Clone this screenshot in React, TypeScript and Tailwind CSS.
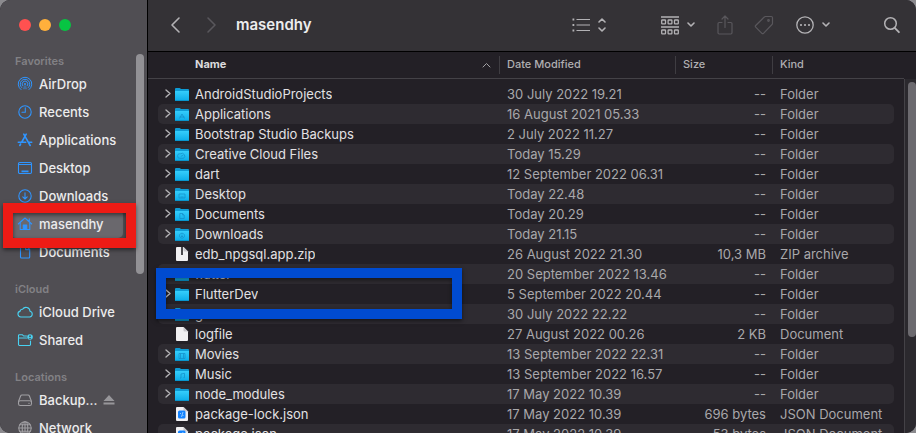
import React from "react";
import type { ReactNode } from "react";

type FileKind = "folder" | "zip" | "doc" | "json";
type Mark = "app" | "cloud" | "screen" | "page" | "down" | "film" | "note";

interface Entry {
  name: string;
  date: string;
  size: string;
  kind: string;
  icon: FileKind;
  mark?: Mark;
}

const entries: Entry[] = [
  { name: "AndroidStudioProjects", date: "30 July 2022 19.21", size: "--", kind: "Folder", icon: "folder" },
  { name: "Applications", date: "16 August 2021 05.33", size: "--", kind: "Folder", icon: "folder", mark: "app" },
  { name: "Bootstrap Studio Backups", date: "2 July 2022 11.27", size: "--", kind: "Folder", icon: "folder" },
  { name: "Creative Cloud Files", date: "Today 15.29", size: "--", kind: "Folder", icon: "folder", mark: "cloud" },
  { name: "dart", date: "12 September 2022 06.31", size: "--", kind: "Folder", icon: "folder" },
  { name: "Desktop", date: "Today 22.48", size: "--", kind: "Folder", icon: "folder", mark: "screen" },
  { name: "Documents", date: "Today 20.29", size: "--", kind: "Folder", icon: "folder", mark: "page" },
  { name: "Downloads", date: "Today 21.15", size: "--", kind: "Folder", icon: "folder", mark: "down" },
  { name: "edb_npgsql.app.zip", date: "26 August 2022 21.30", size: "10,3 MB", kind: "ZIP archive", icon: "zip" },
  { name: "flutter", date: "20 September 2022 13.46", size: "--", kind: "Folder", icon: "folder" },
  { name: "FlutterDev", date: "5 September 2022 20.44", size: "--", kind: "Folder", icon: "folder" },
  { name: "go", date: "30 July 2022 22.22", size: "--", kind: "Folder", icon: "folder" },
  { name: "logfile", date: "27 August 2022 00.26", size: "2 KB", kind: "Document", icon: "doc" },
  { name: "Movies", date: "13 September 2022 22.31", size: "--", kind: "Folder", icon: "folder", mark: "film" },
  { name: "Music", date: "13 September 2022 16.57", size: "--", kind: "Folder", icon: "folder", mark: "note" },
  { name: "node_modules", date: "17 May 2022 10.39", size: "--", kind: "Folder", icon: "folder" },
  { name: "package-lock.json", date: "17 May 2022 10.39", size: "696 bytes", kind: "JSON Document", icon: "json" },
  { name: "package.json", date: "17 May 2022 10.39", size: "53 bytes", kind: "JSON Document", icon: "json" },
];

const marks: Record<Mark, ReactNode> = {
  app: <path d="M4.5 10.500 7 6l2.500 4.500M4.500 9h5" />,
  cloud: <path d="M5 10.300a2.300 2.300 0 1 1 .5-4.500 2.600 2.600 0 1 1 3 4.500zM5.800 8.500l2.400-1.500" />,
  screen: <path d="M4 6h6v4H4zM5.500 9h3" />,
  page: <path d="M4.800 5.500h2.700L9.200 7v3.500H4.800zM7.500 5.500V7H9" />,
  down: <path d="M7 5.200a2.500 2.500 0 1 0 .01 0M7 6.500v2.400M6 8l1 1 1-1" />,
  film: <path d="M4 5.500h6v5H4zM5.500 5.500v5M8.500 5.500v5" />,
  note: <path d="M6 10V6l3.500-.7V9.500M5 10.100h1M8.500 9.600h1" />,
};

function FolderIcon({ mark }: { mark?: Mark }) {
  return (
    <svg width="14" height="14" viewBox="0 -1 14 14" aria-hidden="true" className="shrink-0">
      <defs>
        <linearGradient id="folderFace" x1="0" y1="0" x2="0" y2="1">
          <stop offset="0" stopColor="#35cdfb" />
          <stop offset="1" stopColor="#0cabe8" />
        </linearGradient>
      </defs>
      <path d="M0 1Q0 0 1 0h3.500q.6 0 1 .5l.4.500h7.100q1 0 1 1V5H0z" fill="#0e9bd4" />
      <path d="M0 3h14v9q0 1-1 1H1q-1 0-1-1z" fill="url(#folderFace)" />
      <path d="M0 12h14q0 1-1 1H1q-1 0-1-1z" fill="#0895cd" />
      {mark && (
        <g fill="none" stroke="#1591cb" strokeWidth=".9" strokeOpacity=".85">
          {marks[mark]}
        </g>
      )}
    </svg>
  );
}

function PageIcon({ kind }: { kind: FileKind }) {
  return (
    <svg width="14" height="14" viewBox="0 0 14 14" aria-hidden="true" className="shrink-0">
      <path d="M1 1q0-1 1-1h6.500L13 4.500V13q0 1-1 1H2q-1 0-1-1z" fill="#f1f0f2" />
      <path d="M8.500 0v3.500q0 1 1 1H13z" fill="#c9c8cc" />
      {kind === "zip" && <path d="M6 0h2v8H6z" fill="#4a494d" />}
      {kind === "json" && (
        <>
          <rect x="3" y="3.500" width="7.500" height="8" rx="1.500" fill="#1483ff" />
          <path d="M8 5 6.500 10M6 6.500H5M8.500 8.500h-1" stroke="#9fd0ff" strokeWidth=".9" fill="none" />
        </>
      )}
    </svg>
  );
}

function SideIcon({ children, tone }: { children: ReactNode; tone: string }) {
  return (
    <svg
      width="16"
      height="16"
      viewBox="0 0 16 16"
      fill="none"
      stroke="currentColor"
      strokeWidth="1.1"
      strokeLinecap="round"
      strokeLinejoin="round"
      aria-hidden="true"
      className={`shrink-0 ${tone}`}
    >
      {children}
    </svg>
  );
}

const blue = "text-[#2f95ff]";
const cyan = "text-[#48d2f2]";
const grey = "text-[#a09fa3]";

interface Place {
  label: string;
  tone: string;
  icon: ReactNode;
  selected?: boolean;
  eject?: boolean;
}

const groups: { title: string; places: Place[] }[] = [
  {
    title: "Favorites",
    places: [
      {
        label: "AirDrop",
        tone: blue,
        icon: (
          <>
            <path d="M4 13.600a6.800 6.800 0 1 1 8 0" strokeWidth="1" />
            <path d="M4.700 11.600a4.800 4.800 0 1 1 6.600 0" strokeWidth="1" />
            <path d="M5.800 9.900a2.900 2.900 0 1 1 4.400 0" strokeWidth="1" />
            <path d="M8 8.200 5.500 13.200h5z" fill="currentColor" stroke="none" fillOpacity=".45" />
            <circle cx="8" cy="8" r="1" fill="currentColor" stroke="none" />
          </>
        ),
      },
      {
        label: "Recents",
        tone: blue,
        icon: (
          <>
            <circle cx="8" cy="8" r="6.200" />
            <path d="M8.300 3.800v4.500H5" />
          </>
        ),
      },
      {
        label: "Applications",
        tone: blue,
        icon: (
          <path d="M6.800 2.200 8 4.300M9.200 2.200 4.800 10M8 4.300l5.200 9.200M1.300 10.300h7.400M11.300 10.300h3.400M3.600 12 2.800 13.500" strokeWidth="1.600" />
        ),
      },
      {
        label: "Desktop",
        tone: blue,
        icon: (
          <>
            <rect x="1.500" y="2.500" width="13" height="11" rx="1.200" />
            <path d="M1.500 4.500h13" strokeWidth="1.200" />
            <path d="M4.500 11.300h7" strokeWidth="1.800" strokeLinecap="butt" />
          </>
        ),
      },
      {
        label: "Downloads",
        tone: blue,
        icon: (
          <>
            <circle cx="8" cy="8" r="6.200" />
            <path d="M8 4.800v6M5.800 8.800 8 11l2.200-2.200" />
          </>
        ),
      },
      {
        label: "masendhy",
        tone: blue,
        selected: true,
        icon: (
          <>
            <path d="M1.300 8 8 2l6.700 6M12.300 5.500V2.800" />
            <path d="M3.200 7v6.500h9.600V7" />
            <path d="M6.300 13.500V9h3.400v4.500z" fill="currentColor" />
          </>
        ),
      },
      {
        label: "Documents",
        tone: blue,
        icon: <path d="M3.500 2.500q0-1 1-1h4.300l3.900 3.900v7.600q0 1-1 1H4.500q-1 0-1-1zM8.600 1.800v3.800h3.800" />,
      },
    ],
  },
  {
    title: "iCloud",
    places: [
      {
        label: "iCloud Drive",
        tone: cyan,
        icon: <path d="M3.800 13a3 3 0 0 1-.6-5.900 2 2 0 0 1 2.400-1.800A4 4 0 0 1 13 7.300a2.900 2.900 0 0 1-.3 5.700z" />,
      },
      {
        label: "Shared",
        tone: cyan,
        icon: (
          <>
            <path d="M9.500 4H6.600L5.500 2.800H2.300q-.8 0-.8.800v9q0 .9.900.9h10.200q.9 0 .9-.9V9M1.500 6h8" />
            <circle cx="13" cy="5" r="2.800" fill="currentColor" stroke="none" />
            <circle cx="13" cy="4.200" r=".9" fill="#504e53" stroke="none" />
            <path d="M11.600 6.700a1.500 1.500 0 0 1 2.800 0z" fill="#504e53" stroke="none" />
          </>
        ),
      },
    ],
  },
  {
    title: "Locations",
    places: [
      {
        label: "Backup...",
        tone: grey,
        eject: true,
        icon: (
          <>
            <path d="M1.500 9.500 3.600 4q.4-1 1.400-1h6q1 0 1.400 1l2.100 5.500" />
            <rect x="1.500" y="8.800" width="13" height="4.700" rx="1.800" />
            <path d="M11.800 11.200h.4" />
          </>
        ),
      },
      {
        label: "Network",
        tone: grey,
        icon: (
          <>
            <circle cx="8" cy="8" r="6.200" />
            <ellipse cx="8" cy="8" rx="2.800" ry="6.200" />
            <path d="M8 1.800v12.400M1.800 8h12.400M2.800 4.800h10.400M2.800 11.200h10.400" />
          </>
        ),
      },
    ],
  },
];

function Sidebar() {
  return (
    <nav className="relative w-[147px] shrink-0 overflow-hidden bg-[#504e53]" aria-label="Places">
      <div className="flex h-[52px] items-center gap-2 px-[19px] pb-0.5">
        <button type="button" aria-label="Close" className="size-3 rounded-full bg-[#ff5150]" />
        <button type="button" aria-label="Minimise" className="size-3 rounded-full bg-[#ffb03c]" />
        <button type="button" aria-label="Zoom" className="size-3 rounded-full bg-[#07c443]" />
      </div>
      {groups.map((group, i) => (
        <section key={group.title} className={i === 0 ? "" : "pt-[14px]"}>
          <h2 className="h-[18px] pl-[15px] text-[11px] leading-[18px] font-semibold text-[#828185]">{group.title}</h2>
          <ul className="px-[10px]">
            {group.places.map((place) => (
              <li key={place.label}>
                <a
                  href="#"
                  className={`mr-[14px] flex h-7 items-center gap-[6px] rounded-[5px] pl-[7px] text-[13px] font-medium whitespace-nowrap text-[#ececed] ${place.selected ? "bg-[#6a686d]" : ""}`}
                >
                  <SideIcon tone={place.tone}>{place.icon}</SideIcon>
                  <span className="pt-0.5">{place.label}</span>
                  {place.eject && (
                    <svg width="12" height="10" viewBox="0 0 12 10" fill="#97969a" aria-hidden="true">
                      <path d="M6 0l5.500 6H.5zM.5 7.500h11v2H.5z" />
                    </svg>
                  )}
                </a>
              </li>
            ))}
          </ul>
        </section>
      ))}
      <div className="absolute top-[54px] right-[3px] h-[220px] w-2 rounded-full bg-[#929195]" />
    </nav>
  );
}

function Chevron() {
  return (
    <svg width="8" height="6" viewBox="0 0 8 6" fill="none" stroke="currentColor" strokeWidth="1.600" strokeLinecap="round" strokeLinejoin="round" aria-hidden="true">
      <path d="M1 1l3 3 3-3" />
    </svg>
  );
}

function Toolbar() {
  return (
    <header className="flex h-[52px] shrink-0 items-center border-b border-black bg-[#343236] pr-[16px] pl-[21px] pb-px text-[#b3b2b5]">
      <button type="button" aria-label="Back">
        <svg width="12" height="18" viewBox="0 0 12 18" fill="none" stroke="currentColor" strokeWidth="1.600" strokeLinecap="round" strokeLinejoin="round" aria-hidden="true">
          <path d="M10 2 3 9l7 7" />
        </svg>
      </button>
      <button type="button" aria-label="Forward" className="ml-6 text-[#59575c]">
        <svg width="12" height="18" viewBox="0 0 12 18" fill="none" stroke="currentColor" strokeWidth="1.600" strokeLinecap="round" strokeLinejoin="round" aria-hidden="true">
          <path d="M3 2l7 7-7 7" />
        </svg>
      </button>
      <h1 className="ml-[19px] flex-1 text-[15px] leading-5 font-semibold text-[#ececed]">masendhy</h1>
      <button type="button" aria-label="View as list" className="flex items-center gap-2">
        <svg width="18" height="14" viewBox="0 0 18 14" fill="none" stroke="currentColor" strokeWidth="1.200" aria-hidden="true">
          <path d="M4.500 1.500H18M4.500 7H18M4.500 12.500H18" />
          <path d="M.5 1.500h1.800M.5 7h1.800M.5 12.500h1.800" strokeWidth="1.800" />
        </svg>
        <svg width="8" height="14" viewBox="0 0 8 14" fill="none" stroke="currentColor" strokeWidth="1.600" strokeLinecap="round" strokeLinejoin="round" aria-hidden="true">
          <path d="M1 4l3-3 3 3M1 10l3 3 3-3" />
        </svg>
      </button>
      <button type="button" aria-label="Group items" className="ml-[55px] flex items-center gap-2">
        <svg width="18" height="19" viewBox="0 0 18 19" fill="none" stroke="currentColor" strokeWidth="1.300" aria-hidden="true">
          <path d="M0 1h18M0 11h18" />
          <rect x=".7" y="4" width="3.800" height="3.800" rx=".6" />
          <rect x="7.100" y="4" width="3.800" height="3.800" rx=".6" />
          <rect x="13.500" y="4" width="3.800" height="3.800" rx=".6" />
          <rect x=".7" y="14" width="3.800" height="3.800" rx=".6" />
          <rect x="7.100" y="14" width="3.800" height="3.800" rx=".6" />
          <rect x="13.500" y="14" width="3.800" height="3.800" rx=".6" />
        </svg>
        <Chevron />
      </button>
      <button type="button" aria-label="Share" className="ml-[22px] text-[#59575c]">
        <svg width="16" height="20" viewBox="0 0 16 20" fill="none" stroke="currentColor" strokeWidth="1.200" strokeLinecap="round" strokeLinejoin="round" aria-hidden="true">
          <path d="M5 7.500H2.200Q1 7.500 1 8.700v9.100Q1 19 2.200 19h11.600q1.200 0 1.200-1.200V8.700q0-1.200-1.200-1.200H11M8 12.500V1M5 4l3-3 3 3" />
        </svg>
      </button>
      <button type="button" aria-label="Edit tags" className="ml-[21px] text-[#59575c]">
        <svg width="20" height="20" viewBox="0 0 20 20" fill="none" stroke="currentColor" strokeWidth="1.200" strokeLinecap="round" strokeLinejoin="round" aria-hidden="true">
          <path d="M11.500 1.500h5.800q1.200 0 1.200 1.200v5.600q0 .7-.5 1.200l-8.500 8.800q-.8.800-1.600 0L1.700 12.100q-.8-.8 0-1.600l8.600-8.500q.5-.5 1.200-.5z" />
          <circle cx="14.500" cy="5.500" r=".8" />
        </svg>
      </button>
      <button type="button" aria-label="More actions" className="ml-[22px] flex items-center gap-2">
        <svg width="18" height="18" viewBox="0 0 18 18" fill="none" stroke="currentColor" strokeWidth="1.300" aria-hidden="true">
          <circle cx="9" cy="9" r="8.200" />
          <path d="M5 9h.01M9 9h.01M13 9h.01" strokeWidth="2.200" strokeLinecap="round" />
        </svg>
        <Chevron />
      </button>
      <button type="button" aria-label="Search" className="ml-[53px]">
        <svg width="17" height="18" viewBox="0 0 17 18" fill="none" stroke="currentColor" strokeWidth="1.500" strokeLinecap="round" aria-hidden="true">
          <circle cx="7.500" cy="7.500" r="5.800" />
          <path d="M11.700 11.800l4.200 4.400" strokeWidth="1.800" />
        </svg>
      </button>
    </header>
  );
}

const sortCell = "flex h-[18px] items-center border-l border-[#3f3d42] pl-[7px] font-medium";

function FileTable() {
  return (
    <table className="block min-w-0 flex-1 text-left text-[13px]">
      <thead className="block">
        <tr className="flex h-[27px] items-center border-b border-[#444247] pb-px text-[11px] text-[#b0afb2]">
          <th scope="col" className="flex min-w-0 flex-1 items-center justify-between pr-2 pl-[47px] font-bold text-[#dcdbdd]">
            Name
            <svg width="9" height="6" viewBox="0 0 9 6" fill="none" stroke="#a3a2a5" strokeLinecap="round" aria-hidden="true">
              <path d="M1 5l3.500-3.500L8 5" />
            </svg>
          </th>
          <th scope="col" className={`w-[176px] ${sortCell}`}>Date Modified</th>
          <th scope="col" className={`w-[97px] ${sortCell}`}>Size</th>
          <th scope="col" className={`w-[132px] ${sortCell}`}>Kind</th>
        </tr>
      </thead>
      <tbody className="block px-[10px] pt-[5px]">
        {entries.map((entry) => (
          <tr key={entry.name} className="flex h-5 items-center rounded-[5px] leading-5 whitespace-nowrap text-[#a9a8ab] even:bg-[#2e2b31]">
            <td className="flex min-w-0 flex-1 items-center pl-[7px] text-[#e2e1e3]">
              <span className="flex w-[10px] shrink-0">
                {entry.icon === "folder" && (
                  <svg width="6" height="10" viewBox="0 0 6 10" fill="none" stroke="#b3b2b5" strokeWidth="1.400" strokeLinecap="round" strokeLinejoin="round" aria-hidden="true">
                    <path d="M1 1l4 3.500L1 8" />
                  </svg>
                )}
              </span>
              {entry.icon === "folder" ? <FolderIcon mark={entry.mark} /> : <PageIcon kind={entry.icon} />}
              <span className="truncate pl-[6px]">{entry.name}</span>
            </td>
            <td className="w-[176px] pl-2">{entry.date}</td>
            <td className="w-[97px] pr-[6px] text-right">{entry.size}</td>
            <td className="w-[122px] pl-2">{entry.kind}</td>
          </tr>
        ))}
      </tbody>
    </table>
  );
}

export default function App() {
  return (
    <div className="relative h-screen overflow-hidden bg-[#8b8a8e] font-['Inter','Liberation_Sans',sans-serif]">
      <div className="flex h-full overflow-hidden rounded-[10px] bg-[#232026]">
        <Sidebar />
        <main className="flex min-w-0 flex-1 flex-col border-l border-black">
          <Toolbar />
          <div className="flex min-h-0 flex-1 overflow-hidden">
            <FileTable />
            <div className="flex w-3 shrink-0 flex-col pt-[27px]">
              <div className="flex-1 overflow-hidden border-l border-[#444247] bg-[#2b292e] pt-[3px] pl-[3px]">
                <div className="h-[255px] w-2 rounded-full bg-[#6c6a6f]" />
              </div>
            </div>
          </div>
        </main>
      </div>
      <div className="pointer-events-none absolute top-[203px] left-[3px] h-[45px] w-[133px] border-[10px] border-[#ed1b15] shadow-[0_2px_4px_rgba(0,0,0,0.5),inset_0_2px_4px_rgba(0,0,0,0.5)]" />
      <div className="pointer-events-none absolute top-[268px] left-[156px] h-[51px] w-[306px] border-[10px] border-[#004bd0] shadow-[0_2px_4px_rgba(0,0,0,0.5),inset_0_2px_4px_rgba(0,0,0,0.5)]" />
    </div>
  );
}
